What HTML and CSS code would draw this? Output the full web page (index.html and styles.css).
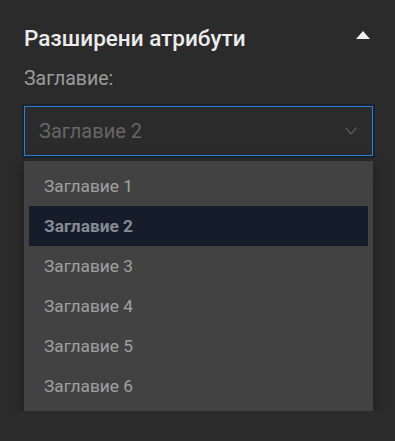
FILE: index.html
```html
<!DOCTYPE html>
<html lang="bg">
<head>
    <meta charset="UTF-8">
    <meta name="viewport" content="width=device-width, initial-scale=1.0">
    <title>Разширени атрибути</title>
    <link rel="stylesheet" href="styles.css">
</head>
<body>
    <div class="panel">
        <div class="head">
            <span class="head-title">Разширени атрибути</span>
            <span class="head-toggle"></span>
        </div>
        <div class="field-label">Заглавие:</div>
        <div class="select">
            <div class="select-box">
                <span class="select-value">Заглавие 2</span>
                <svg class="chevron" width="12" height="8" viewBox="0 0 12 8">
                    <path d="M0.5 0.5 L6 7 L11.5 0.5" fill="none" stroke="#5a5a5a" stroke-width="1.2"/>
                </svg>
            </div>
            <div class="options">
                <div class="option">Заглавие 1</div>
                <div class="option selected">Заглавие 2</div>
                <div class="option">Заглавие 3</div>
                <div class="option">Заглавие 4</div>
                <div class="option">Заглавие 5</div>
                <div class="option">Заглавие 6</div>
            </div>
        </div>
    </div>
</body>
</html>
```

FILE: styles.css
```css
body {
    font-family: Roboto, "Noto Sans", sans-serif;
    background-color: #2b2b2b;
    margin: 0;
}
.panel {
    padding: 22px 22px 0 24px;
}
.head {
    display: flex;
    justify-content: space-between;
    align-items: center;
    height: 32px;
}
.head-title {
    color: #ececec;
    font-size: 22.5px;
    font-weight: 500;
}
.head-toggle {
    width: 0;
    height: 0;
    border-left: 7px solid transparent;
    border-right: 7px solid transparent;
    border-bottom: 8px solid #f0f0f0;
    margin-right: 3px;
    margin-top: -7px;
}
.field-label {
    color: #9a9a9a;
    font-size: 19.5px;
    margin-top: 13px;
    height: 26px;
}
.select {
    margin-top: 13px;
}
.select-box {
    height: 48px;
    border: 1px solid #2a80d8;
    box-shadow: 0 0 0 2px #1c2229;
    display: flex;
    align-items: center;
    justify-content: space-between;
    padding: 0 15px 0 14px;
}
.select-value {
    color: #666666;
    font-size: 20px;
}
.options {
    margin-top: 5px;
    background: #424242;
    padding: 5px;
    box-shadow: 0 4px 12px rgba(0, 0, 0, 0.35);
}
.option {
    height: 40px;
    display: flex;
    align-items: center;
    padding-left: 15px;
    color: #a0a0a0;
    font-size: 17.3px;
}
.option.selected {
    background: #141d29;
    color: #858b95;
    font-weight: bold;
}
```
